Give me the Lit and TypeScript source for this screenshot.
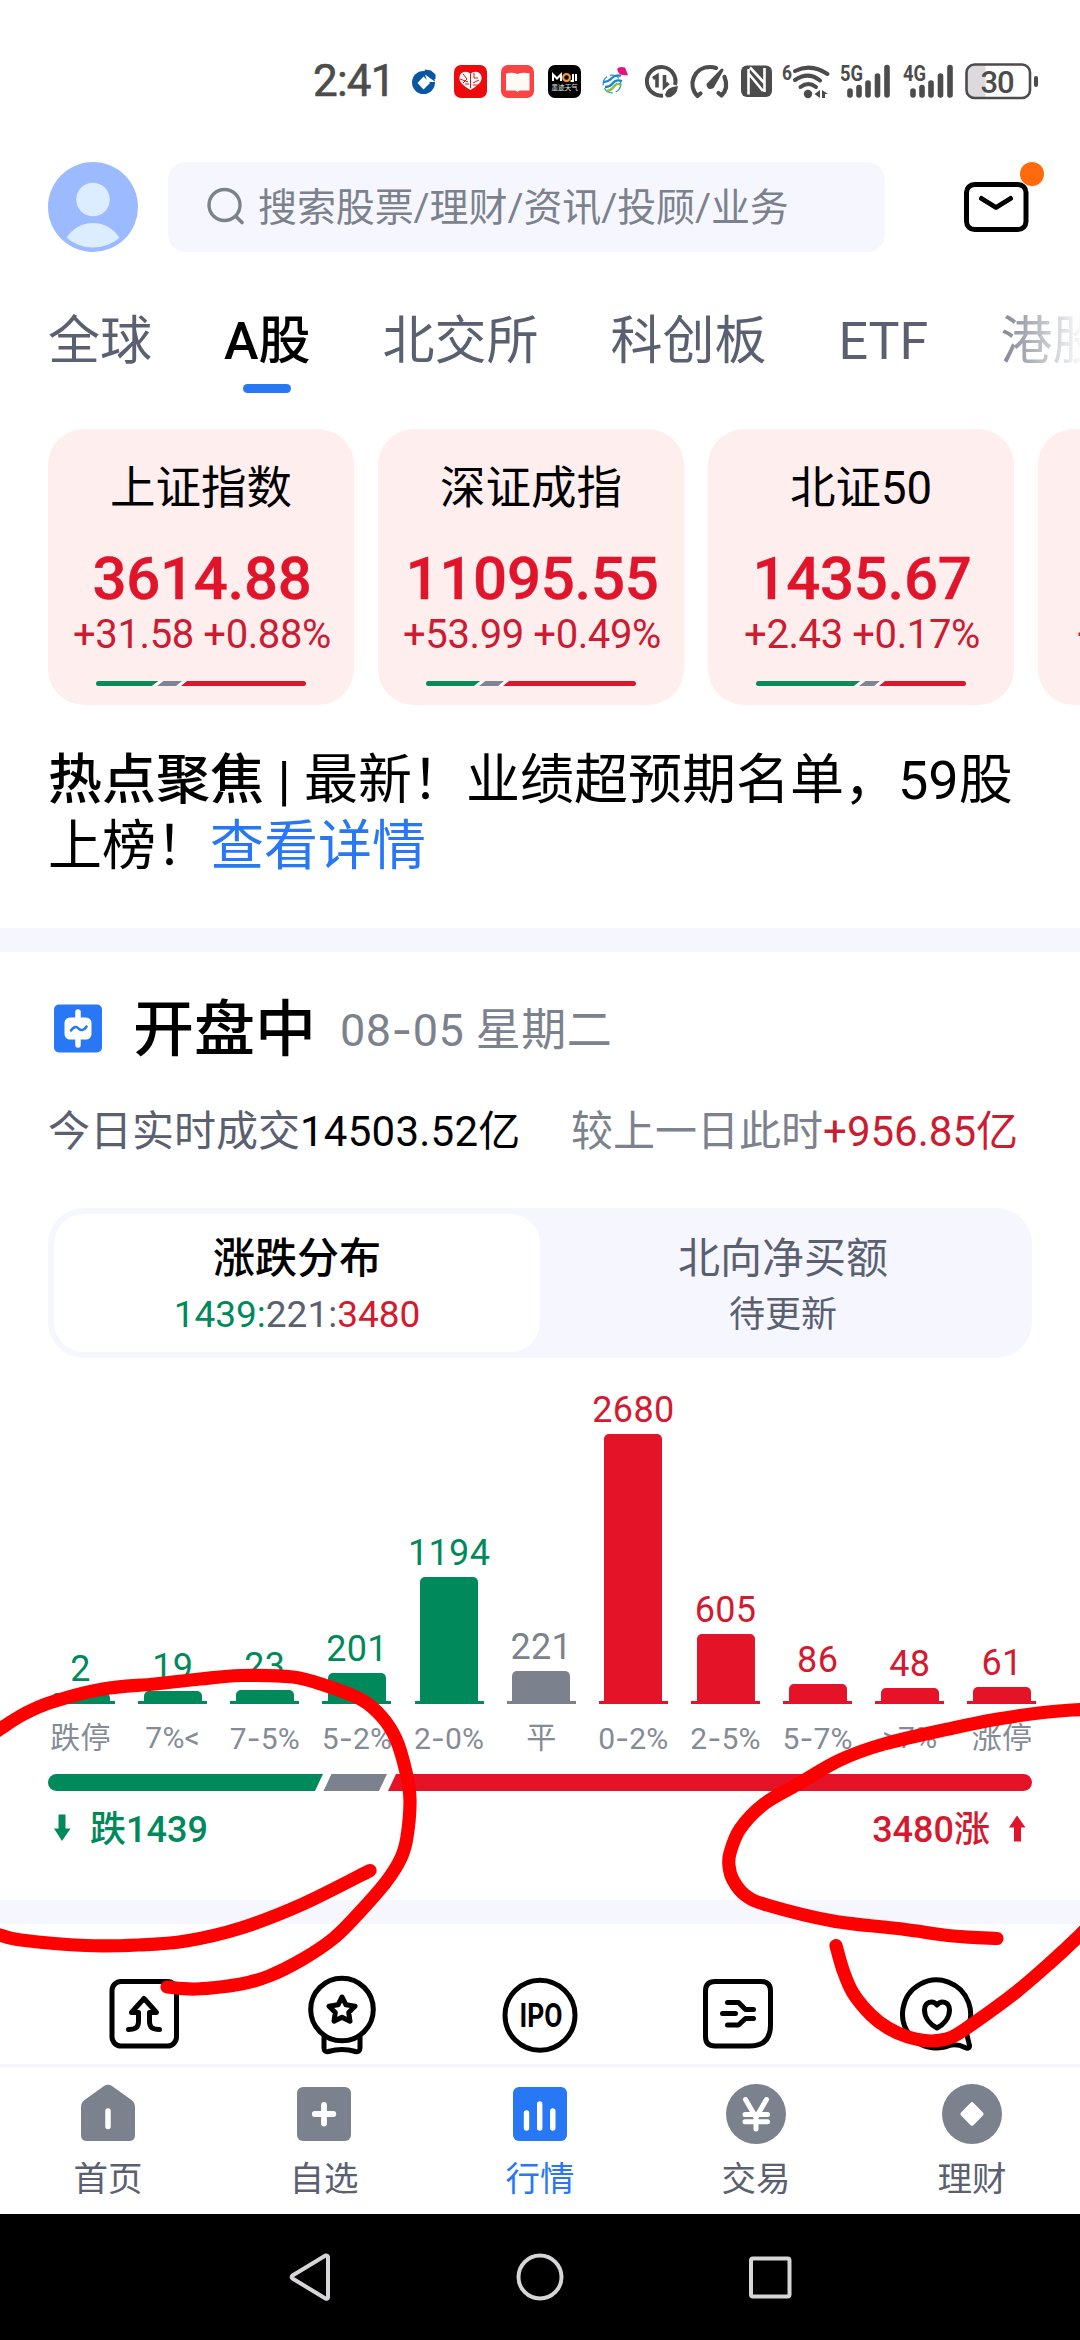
import { LitElement, html, svg, css, nothing } from "lit";
import { customElement } from "lit/decorators.js";
import { classMap } from "lit/directives/class-map.js";
import { styleMap } from "lit/directives/style-map.js";

type Tone = "down" | "flat" | "up";
type Point = [number, number];

const INDICES = [
  { name: "上证指数", value: "3614.88", change: "+31.58 +0.88%", split: [62, 24, 124] },
  { name: "深证成指", value: "11095.55", change: "+53.99 +0.49%", split: [54, 24, 132] },
  { name: "北证50", value: "1435.67", change: "+2.43 +0.17%", split: [104, 20, 86] },
];

const BARS: { label: string; value: number; height: number; tone: Tone }[] = [
  { label: "跌停", value: 2, height: 11, tone: "down" },
  { label: "7%<", value: 19, height: 13, tone: "down" },
  { label: "7-5%", value: 23, height: 14, tone: "down" },
  { label: "5-2%", value: 201, height: 31, tone: "down" },
  { label: "2-0%", value: 1194, height: 127, tone: "down" },
  { label: "平", value: 221, height: 33, tone: "flat" },
  { label: "0-2%", value: 2680, height: 270, tone: "up" },
  { label: "2-5%", value: 605, height: 70, tone: "up" },
  { label: "5-7%", value: 86, height: 20, tone: "up" },
  { label: ">7%", value: 48, height: 16, tone: "up" },
  { label: "涨停", value: 61, height: 17, tone: "up" },
];

/* Freehand marker strokes, as the points the pen passed through. */
const STROKES: Point[][] = [
  [[-14, 1739], [0, 1729], [24, 1714], [52, 1702], [103, 1689], [155, 1684], [200, 1679], [241, 1675.5], [293, 1677], [327, 1686], [362, 1700], [382, 1717], [396, 1739], [406, 1772], [410, 1800], [407, 1837], [401, 1858], [386, 1882], [358, 1914], [334, 1938], [303, 1959], [269, 1976], [241, 1984], [196, 1989], [167, 1987]],
  [[-12, 1931], [0, 1935], [21, 1940], [86, 1945.5], [138, 1945], [186, 1941], [241, 1928], [303, 1904], [370, 1870.5]],
  [[1094, 1709], [1072, 1710], [1039, 1713], [998, 1719], [953, 1728], [884, 1744], [840, 1760], [798, 1784], [764, 1804], [740, 1829], [730, 1853], [729, 1866], [733, 1880], [745, 1895], [767, 1905], [833, 1921], [902, 1929], [953, 1936], [997, 1938.5]],
  [[836, 1945.5], [843, 1970], [853, 1993], [871, 2015], [888, 2028], [908, 2037], [931, 2041], [952, 2037], [974, 2023], [1015, 1993], [1050, 1963], [1080, 1935], [1094, 1920]],
];

function smooth(p: Point[]): string {
  let d = `M${p[0][0]} ${p[0][1]}`;
  for (let i = 0; i < p.length - 1; i++) {
    const a = p[i - 1] ?? p[i], b = p[i], c = p[i + 1], e = p[i + 2] ?? c;
    d += `C${b[0] + (c[0] - a[0]) / 6} ${b[1] + (c[1] - a[1]) / 6} ${c[0] - (e[0] - b[0]) / 6} ${c[1] - (e[1] - b[1]) / 6} ${c[0]} ${c[1]}`;
  }
  return d;
}

/* The view box of each icon uses page coordinates. */
const icon = (x: number, y: number, w: number, h: number, body: unknown) =>
  html`<svg class="icon" width=${w} height=${h} viewBox="${x} ${y} ${w} ${h}" fill="none">${body}</svg>`;

const INK = "#4b4c4b";

const signal = (x: number, label: string) => icon(x, 60, 51, 40, svg`
  <text x=${x} y="80" font-family="Roboto" font-weight="700" font-size="22" textLength="23" lengthAdjust="spacingAndGlyphs" fill=${INK}>${label}</text>
  <g stroke=${INK} stroke-width="5.6" stroke-linecap="round">
    <path d="M${x + 10} 90v4M${x + 19} 86.500v7.500M${x + 28} 82v12M${x + 37.500} 75v19M${x + 47} 66.500v27.500"/>
  </g>`);

const statusIcons = [
  { gap: 20, body: icon(411, 66, 24, 28, svg`
    <circle cx="422.500" cy="81.500" r="11.500" fill="#0a56a5"/>
    <path d="M424 73.500l10.500 7.500h-8z" fill="#fff"/>
    <path d="M424 68.500l6 1 4.500 4v4.500h-3.500l-8-6.500z" fill="#0a56a5"/>
    <path d="M422.500 75.500l6.500 6.500-6.500 6.500-6-6.500z" fill="#fff"/>`) },
  { gap: 18, body: icon(453, 64, 33, 33, svg`
    <rect x="453" y="64" width="33" height="33" rx="7" fill="#ee0a0c"/>
    <path d="M469.500 73c-3-3-8-3-10.500 1-2 6 1 9 10.500 15 9.500-6 12.500-9 10.500-15-2.500-4-7.500-4-10.500-1z" fill="#fff"/>
    <path d="M462 73l4 5M459 78l8 3M473 72v5h4M478 79l-6 3M469.500 73v14M464 83h4M472 84h5M462 82l4-4" stroke="#ee0a0c" stroke-width="1"/>`) },
  { gap: 14, body: icon(500, 64, 33, 33, svg`
    <rect x="500" y="64" width="33" height="33" rx="7" fill="#f84444"/>
    <path d="M505 72.500q6-1.500 11.500.5 6-2 12-.5v17h-10l-2 1.500-2-1.500h-9.500z" fill="#fffaf6"/>`) },
  { gap: 14, body: icon(547, 64, 33, 33, svg`
    <rect x="547" y="64" width="33" height="33" rx="7" fill="#000"/>
    <path d="M552 80v-6.500l4 4 4-4v6.500M572 73v7h-2.500M575 73v7" stroke="#fff" stroke-width="2"/>
    <circle cx="565.500" cy="76.500" r="3.400" stroke="#f5963a" stroke-width="2.200"/>
    <text x="550.500" y="88.500" font-family="Noto Sans CJK SC" font-weight="400" font-size="6.600" fill="#eee">墨迹天气</text>`) },
  { gap: 20, body: icon(600, 62, 28, 32, svg`
    <circle cx="611" cy="81" r="8.800" stroke="#3a93c9" stroke-width="1.300" stroke-dasharray="10 3"/>
    <path d="M602 79q5 0 9-4t9-2M604 84q5 0 8-4t9-2" stroke="#1a86cf" stroke-width="2.300"/>
    <path d="M605 88q5 0 8-4.500t7-1.500" stroke="#84bf3e" stroke-width="2.300"/>
    <path d="M616 66q2-3 8-1.500l3 7.500q-7 1-9-1.500z" fill="#e5127f"/>`) },
  { gap: 15, body: icon(643, 62, 34, 37, svg`
    <path d="M662 94.500A14.300 14.300 0 1 1 674 84" stroke=${INK} stroke-width="4"/>
    <path d="M652 77.500l4-2.500v11.500M663.500 74v11.500l4-3.500" stroke=${INK} stroke-width="3.600"/>
    <path d="M664 94q1-8 13-9-1 11-11 11.500z" fill=${INK}/>`) },
  { gap: 12, body: icon(689, 62, 39, 37, svg`
    <path d="M699.500 92.500l-3 2.500C686 84 693 66 709 66q3 0 6 1M723.500 76q4.500 11-3 18.500l-3-2.500" stroke=${INK} stroke-width="4.200" stroke-linecap="round" stroke-linejoin="round"/>
    <path d="M707 83.500l14-14.500-9.500 17q-4 2-4.500-2.500z" fill=${INK} stroke=${INK} stroke-width="3" stroke-linejoin="round"/>`) },
  { gap: 12, body: icon(740, 64, 32, 33, svg`
    <rect x="740" y="64.500" width="31" height="31.500" rx="6" fill=${INK}/>
    <path d="M747.500 68v25.500M763.500 67v24M748 73l14 17M749 66.500l14 15" stroke="#fff" stroke-width="2.600"/>`) },
  { gap: 9, body: icon(781, 60, 49, 40, svg`
    <text x="781" y="78.500" font-family="Roboto" font-weight="700" font-size="21" textLength="10" lengthAdjust="spacingAndGlyphs" fill=${INK}>6</text>
    <path d="M794 70q16-8 32.500 3M794 79q13-9 25 0.500M799.500 86q8-6 15.500 0" stroke=${INK} stroke-width="4" stroke-linecap="round"/>
    <circle cx="807" cy="93" r="4.200" fill=${INK}/>
    <path d="M819 89v8l-5.500-4zM821 89l6 4h-3v4h-3z" fill=${INK}/>`) },
  { gap: 9, body: signal(839, "5G") },
  { gap: 12, body: signal(901, "4G") },
  { gap: 11, body: icon(963, 62, 74, 37, svg`
    <path d="M970.500 64h13v34h-13q-6-1-6-7v-20q0-6 6-7z" fill="#dcdadc"/>
    <rect x="964.500" y="63.500" width="63.500" height="33.500" rx="8" stroke=${INK} stroke-width="2.600"/>
    <path d="M1034 77v7" stroke=${INK} stroke-width="4" stroke-linecap="round"/>
    <text x="995.500" y="91.500" text-anchor="middle" font-family="Roboto" font-weight="500" font-size="31" textLength="34" fill=${INK}>30</text>`) },
];

const SHORTCUTS = [
  icon(104, 1970, 80, 90, svg`
    <rect x="112" y="1981.500" width="64.500" height="64.500" rx="9"/>
    <path d="M128.500 2029.500c7 0 10-2 10-8v-9h-7l12.500-14 12.500 14h-7v9c0 6 3 8 10 8"/>`),
  icon(302, 1970, 80, 90, svg`
    <circle cx="342" cy="2009.500" r="31.300"/>
    <path d="M324 2037v11q0 4.500 4.500 3.500 13.500-4 27 0 4.500 1 4.500-3.500v-11"/>
    <path d="M342 1997l4 7.800 9 1.500-6.300 6.200 1.300 8.700-8-4-8 4 1.300-8.700-6.300-6.200 9-1.500z"/>`),
  icon(500, 1970, 80, 90, svg`
    <circle cx="540" cy="2015.300" r="35"/>
    <text x="541" y="2027" text-anchor="middle" font-family="Roboto" font-weight="700" font-size="33" textLength="43" lengthAdjust="spacingAndGlyphs" fill="#000" stroke="none">IPO</text>`),
  icon(698, 1970, 80, 90, svg`
    <path d="M715 1981.500h46q9.500 0 9.500 9.500v34q0 21-21 21h-34.500q-9.500 0-9.500-9.500v-45.500q0-9.500 9.500-9.500z"/>
    <path d="M727.500 2002.500h11l7 7h8M722.500 2013.500h13M727.500 2025h11l7-6.500h8"/>`),
  icon(896, 1970, 80, 90, svg`
    <path d="M966 2031A34 34 0 1 0 936 2048q8 0 13-2.500 8-2 16 2 4.500 2 4.500-2z"/>
    <path d="M937 2005c-4-5-12.500-3.500-12.500 5 0 8 6 14.500 12.500 18 6.500-3.500 12.500-10 12.500-18 0-8.500-8.500-10-12.500-5z"/>`),
];

const NAV_GREY = "#7c828d";
const NAV = [
  { label: "首页", body: icon(78, 2082, 60, 64, svg`
    <path d="M104 2086q4-2.500 8 0l19.500 14q3.500 2.500 3.500 7v28q0 6-6 6h-42q-6 0-6-6v-28q0-4.500 3.500-7z" fill=${NAV_GREY}/>
    <path d="M108 2111v15.500" stroke="#fff" stroke-width="5.500" stroke-linecap="round"/>`) },
  { label: "自选", body: icon(294, 2082, 60, 64, svg`
    <rect x="297" y="2087" width="54" height="54" rx="6" fill=${NAV_GREY}/>
    <path d="M324 2105v18.500M314.800 2114h18.500" stroke="#fff" stroke-width="5.800" stroke-linecap="round"/>`) },
  { label: "行情", active: true, body: icon(510, 2082, 60, 64, svg`
    <rect x="513" y="2087" width="54" height="54" rx="6" fill="#2877f5"/>
    <path d="M526.500 2113v15M539.700 2104v24M552.800 2111v17" stroke="#fff" stroke-width="5.400" stroke-linecap="round"/>`) },
  { label: "交易", body: icon(726, 2082, 60, 64, svg`
    <circle cx="756" cy="2114" r="30" fill=${NAV_GREY}/>
    <path d="M745.500 2099.500l10.500 18 10.500-18M756 2115v14M745 2114.500h22.500M745 2121.800h22.500" stroke="#fff" stroke-width="5" stroke-linecap="round"/>`) },
  { label: "理财", body: icon(942, 2082, 60, 64, svg`
    <circle cx="972" cy="2114" r="30" fill=${NAV_GREY}/>
    <path d="M972 2104.500l9.300 9.500-9.300 9.500-9.300-9.500z" fill="#fff" stroke="#fff" stroke-width="4.500" stroke-linejoin="round"/>`) },
];

@customElement("app-root")
export class AppRoot extends LitElement {
  static styles = css`
    :host {
      display: flex; flex-direction: column; position: relative;
      width: 1080px; height: 2340px; overflow: hidden; background: #fff; color: #000;
      font-family: Roboto, "Noto Sans CJK SC", sans-serif;
      --blue: #2877f5; --red: #e51328; --red-text: #d51a30; --green: #008a5b;
      --grey: #7c828d; --slate: #5b6071; --pale: #f6f7fe;
    }
    * { box-sizing: border-box; }
    .icon { display: block; flex: none; overflow: visible; }
    .status { display: flex; align-items: center; height: 162px; padding: 0 0 0 313px; flex: none; }
    .time { width: 79px; margin-top: 0; font-size: 44px; line-height: 50px; color: #4b4c4b; white-space: nowrap; letter-spacing: -0.8px; -webkit-text-stroke: 0.6px #4b4c4b; }
    .header { display: flex; height: 90px; padding: 0 36px 0 48px; flex: none; }
    .search { display: flex; align-items: center; width: 717px; margin-left: 30px; padding-left: 37px; border-radius: 18px; background: var(--pale); color: var(--grey); font-size: 39px; line-height: 60px; }
    .query { margin: 2px 0 0 13px; white-space: nowrap; letter-spacing: -0.1px; }
    .mail { margin-left: 75px; }
    .tabs { display: flex; gap: 72px; height: 93px; margin-top: 48px; padding-left: 48px; flex: none; overflow: hidden; font-size: 52px; line-height: 83px; color: var(--slate); white-space: nowrap;
      mask-image: linear-gradient(90deg, #000 975px, transparent 1085px); }
    .tab { display: flex; flex-direction: column; align-items: center; flex: none; }
    .tab.active { color: #000; font-weight: 500; }
    .tab.active::after { content: ""; width: 48px; height: 9px; margin-top: 1px; border-radius: 5px; background: var(--blue); }
    .cards { display: flex; gap: 24px; height: 276px; margin-top: 36px; padding-left: 48px; flex: none; overflow: hidden; }
    .card { display: flex; flex-direction: column; align-items: center; width: 306px; height: 276px; flex: none; padding-top: 30px; border-radius: 36px; background: #ffeeee; white-space: nowrap; }
    .card.peek { align-items: flex-start; padding-left: 37px; }
    .name { height: 60px; font-size: 45.5px; line-height: 60px; }
    .value { height: 74px; margin: 23px 0 0 2px; font-size: 60px; font-weight: 500; line-height: 74px; color: #e0142a; letter-spacing: -0.3px; -webkit-text-stroke: 0.4px #e0142a; }
    .change { height: 40px; margin: -1px 0 0 2px; font-size: 40px; line-height: 40px; color: #cc1c32; letter-spacing: -0.4px; }
    .split { margin-top: 26px; height: 5px; flex: none; }
    .news { margin: 43px 48px 0; height: 180px; font-size: 54px; line-height: 66px; flex: none; }
    .news b { font-weight: 500; }
    .link { color: var(--blue); }
    .band { height: 24px; background: var(--pale); flex: none; }
    .market { display: flex; align-items: center; height: 72px; margin: 41px 48px 0 54px; flex: none; line-height: 72px; }
    .state { margin: 2px 0 0 31px; font-size: 61px; font-weight: 500; }
    .date { margin: 2px 0 0 24px; font-size: 45px; color: var(--grey); letter-spacing: 0.45px; }
    .hyphen { font-family: Inter, sans-serif; }
    .totals { display: flex; justify-content: space-between; height: 60px; margin: 37px 62px 0 48px; font-size: 42px; line-height: 60px; white-space: nowrap; flex: none; color: var(--slate); }
    .totals .total { color: #000; letter-spacing: 0.25px; }
    .totals .versus { color: var(--grey); }
    .totals .plus { color: #cc1c32; }
    .segment { display: grid; grid-template-columns: 1fr 1fr; height: 150px; margin: 46px 48px 0; padding: 6px; border-radius: 36px; background: var(--pale); flex: none; }
    .choice { display: flex; flex-direction: column; align-items: center; padding-top: 17px; border-radius: 30px; color: var(--slate); }
    .choice.active { background: #fff; }
    .choice-title { font-size: 42px; line-height: 56px; }
    .choice.active .choice-title { color: #000; font-weight: 500; }
    .choice-note { font-size: 36px; line-height: 56px; }
    .choice.active .choice-note { font-size: 37px; }
    .down { color: var(--green); }
    .flat { color: var(--grey); }
    .up { color: var(--red-text); }
    .chart { display: grid; grid-template-columns: repeat(11, 1fr); height: 346px; margin: 0 32px 0 34.5px; flex: none; }
    .column { display: flex; flex-direction: column; align-items: center; justify-content: flex-end; }
    .count { font-size: 36px; line-height: 42px; margin-bottom: 3px; letter-spacing: 0.3px; }
    .bar { width: 58px; border-radius: 5px 5px 0 0; }
    .foot { width: 69px; height: 3px; margin-top: -3px; }
    .down .bar, .down .foot { background: var(--green); }
    .flat .bar, .flat .foot { background: var(--grey); }
    .up .bar, .up .foot { background: var(--red); }
    .axis { display: grid; grid-template-columns: repeat(11, 1fr); height: 40px; margin: 14px 32px 0 34.5px; font-size: 30px; line-height: 40px; text-align: center; white-space: nowrap; color: #858b96; flex: none; letter-spacing: 0.2px; }
    .ratio { margin: 16px 48px 0; flex: none; }
    .sums { display: flex; justify-content: space-between; height: 40px; margin: 17px 54px 0; font-size: 36px; font-weight: 500; line-height: 40px; flex: none; }
    .sum { display: flex; align-items: center; gap: 19px; }
    .sum span { margin-top: 3px; }
    .sums + .band { margin-top: 52px; }
    .shortcuts { display: grid; grid-template-columns: repeat(5, 1fr); justify-items: center; height: 140px; padding: 46px 45px 0; overflow: hidden; flex: none; }
    .shortcuts .icon { stroke: #000; stroke-width: 5; stroke-linecap: round; stroke-linejoin: round; }
    .nav { display: grid; grid-template-columns: repeat(5, 1fr); height: 150px; border-top: 3px solid #f4f5fd; background: #fff; flex: none; }
    .nav-item { display: flex; flex-direction: column; align-items: center; padding-top: 15px; font-size: 34.5px; line-height: 50px; color: var(--slate); }
    .nav-item span { margin-top: 8px; }
    .nav-item.active { color: var(--blue); }
    .system { display: flex; align-items: center; justify-content: center; gap: 182px; height: 126px; background: #000; flex: none; }
    .system .icon { stroke: #d8d5d8; stroke-width: 4; stroke-linejoin: round; }
    .marker { position: absolute; left: 0; top: 0; width: 1080px; height: 2340px; pointer-events: none; }
  `;

  private hyphenated(text: string) {
    const [a, b] = text.split("-");
    return b === undefined ? a : html`${a}<span class="hyphen">-</span>${b}`;
  }

  private split([down, flat]: number[]) {
    const a = down, b = down + flat;
    return html`<svg class="split" width="210" height="5" viewBox="0 0 210 5">
      <path d="M2.500 0H${a + 0.5}L${a - 6} 5H2.500a2.500 2.500 0 0 1 0-5z" fill="#0a8a5c"/>
      <path d="M${a + 0.5} 0H${a + 5.500}L${a - 1} 5H${a - 6}zM${b} 0H${b + 5}L${b - 1} 5H${b - 6}z" fill="#fff"/>
      <path d="M${a + 5.500} 0H${b}L${b - 6} 5H${a - 1}z" fill="#7f8492"/>
      <path d="M${b + 5} 0H207.500a2.500 2.500 0 0 1 0 5H${b - 1}z" fill="#d8182e"/>
    </svg>`;
  }

  render() {
    return html`
      <div class="status">
        <span class="time">2:41</span>
        ${statusIcons.map((s) => html`<div style=${styleMap({ marginLeft: `${s.gap}px` })}>${s.body}</div>`)}
      </div>

      <div class="header">
        ${icon(48, 162, 90, 90, svg`
          <clipPath id="face"><circle cx="93" cy="207" r="40.500"/></clipPath>
          <circle cx="93" cy="207" r="45" fill="#9bbaff"/>
          <circle cx="93" cy="199.500" r="16.800" fill="#dcedff"/>
          <circle cx="93" cy="254" r="31" fill="#dcedff" clip-path="url(#face)"/>`)}
        <div class="search">
          ${icon(205, 187, 40, 40, svg`
            <circle cx="224.500" cy="205" r="15.500" stroke="#7c828d" stroke-width="3.400"/>
            <path d="M236 216.500l6 6" stroke="#7c828d" stroke-width="3.600" stroke-linecap="round"/>`)}
          <span class="query">搜索股票/理财/资讯/投顾/业务</span>
        </div>
        <div class="mail">
          ${icon(960, 162, 84, 90, svg`
            <rect x="966.500" y="184.500" width="59.500" height="45" rx="8" stroke="#000" stroke-width="5"/>
            <path d="M981.500 198.500l14.500 9 14.500-9" stroke="#000" stroke-width="5" stroke-linecap="round" stroke-linejoin="round"/>
            <circle cx="1032" cy="174" r="12" fill="#ff6a0d"/>`)}
        </div>
      </div>

      <div class="tabs">
        ${["全球", "A股", "北交所", "科创板", "ETF", "港股"].map(
          (t) => html`<div class=${classMap({ tab: true, active: t === "A股" })}>${t}</div>`)}
      </div>

      <div class="cards">
        ${INDICES.map((i) => html`<div class="card">
          <div class="name">${i.name}</div>
          <div class="value">${i.value}</div>
          <div class="change">${i.change}</div>
          ${this.split(i.split)}
        </div>`)}
        <div class="card peek">
          <div class="name"></div>
          <div class="value"></div>
          <div class="change">+</div>
        </div>
      </div>

      <div class="news"><b>热点聚焦</b> | 最新！业绩超预期名单，59股上榜！<span class="link">查看详情</span></div>

      <div class="band"></div>

      <div class="market">
        ${icon(54, 1005.5, 48, 48, svg`
          <rect x="54" y="1005" width="48" height="48" rx="5" fill="#2877f5"/>
          <rect x="64.500" y="1018" width="27" height="22" rx="5.500" fill="#fff"/>
          <path d="M78 1012.500v33" stroke="#fff" stroke-width="5.500" stroke-linecap="round"/>
          <path d="M71 1031q4-6 8-1.500 4 3 7.500-2.500" stroke="#2877f5" stroke-width="2.600" stroke-linecap="round"/>`)}
        <span class="state">开盘中</span>
        <span class="date">${this.hyphenated("08-05 星期二")}</span>
      </div>

      <div class="totals">
        <span>今日实时成交<span class="total">14503.52亿</span></span>
        <span class="versus">较上一日此时<span class="plus">+956.85亿</span></span>
      </div>

      <div class="segment">
        <div class="choice active">
          <div class="choice-title">涨跌分布</div>
          <div class="choice-note"><span class="down">1439:</span>221:<span class="up">3480</span></div>
        </div>
        <div class="choice">
          <div class="choice-title">北向净买额</div>
          <div class="choice-note">待更新</div>
        </div>
      </div>

      <div class="chart">
        ${BARS.map((b) => html`<div class="column ${b.tone}">
          <div class="count">${b.value}</div>
          <div class="bar" style=${styleMap({ height: `${b.height}px` })}></div>
          <div class="foot"></div>
        </div>`)}
      </div>
      <div class="axis">${BARS.map((b) => html`<div>${this.hyphenated(b.label)}</div>`)}</div>

      <svg class="ratio" width="984" height="17" viewBox="0 0 984 17">
        <path d="M8.500 0H275L267 17H8.500a8.500 8.500 0 0 1 0-17z" fill="#008a5b"/>
        <path d="M283.500 0H339L331 17H275.500z" fill="#7c828d"/>
        <path d="M348 0H975.500a8.500 8.500 0 0 1 0 17H340z" fill="#e51328"/>
      </svg>

      <div class="sums">
        <div class="sum down">
          ${icon(55, 1815, 17, 28, svg`<path d="M59.500 1815.500h7v14h5l-8.500 12.500-8-12.500h4.500z" fill="#008a5b"/>`)}
          <span>跌1439</span>
        </div>
        <div class="sum up">
          <span>3480涨</span>
          ${icon(1009, 1815, 17, 28, svg`<path d="M1014 1842.500h7v-14h4.500l-8.500-12-8 12h5z" fill="#e0142a"/>`)}
        </div>
      </div>

      <div class="band"></div>

      <div class="shortcuts">${SHORTCUTS}</div>

      <div class="nav">
        ${NAV.map((n) => html`<div class=${classMap({ "nav-item": true, active: !!n.active })}>
          ${n.body}<span>${n.label || nothing}</span>
        </div>`)}
      </div>

      <div class="system">
        ${icon(286, 2252, 46, 50, svg`<path d="M327 2257v40.500q-.5 2-2.500 1l-33-20q-1.500-1.500 0-3l33-20q2-.5 2.500 1.500z"/>`)}
        ${icon(515, 2252, 50, 50, svg`<circle cx="540" cy="2277" r="21.500"/>`)}
        ${icon(746, 2252, 46, 50, svg`<rect x="750" y="2258.500" width="38.500" height="38" rx="2"/>`)}
      </div>

      <svg class="marker" viewBox="0 0 1080 2340" fill="none" stroke="#fe0000" stroke-width="13.200" stroke-linecap="round" stroke-linejoin="round">
        ${STROKES.map((s) => svg`<path d=${smooth(s)}/>`)}
      </svg>
    `;
  }
}
